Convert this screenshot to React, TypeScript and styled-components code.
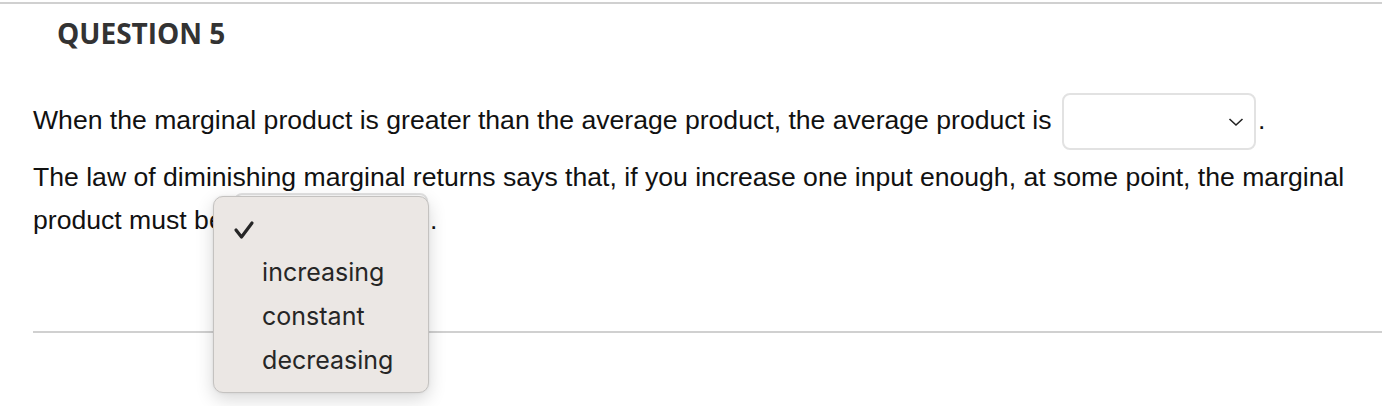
import React from "react";
import styled, {createGlobalStyle} from "styled-components";

const GlobalStyle = createGlobalStyle`
    html, body {
        margin: 0;
        padding: 0;
        background: #ffffff;
    }
    body {
        font-family: "Liberation Sans", Arial, sans-serif;
    }
`;

const Page = styled.div`
    padding-top: 2px;
    width: 1382px;
    min-height: 404px;
`;

const TopRule = styled.div`
    height: 2px;
    background: #d0d0d0;
`;

const Heading = styled.h2`
    margin: 11px 0 0 57px;
    font-family: "Open Sans", sans-serif;
    font-weight: 700;
    font-size: 28px;
    line-height: 36px;
    color: #333333;
`;

const Body = styled.div`
    padding-left: 33px;
`;

const Para = styled.p<{top: number}>`
    margin: ${(p) => p.top}px 0 0;
    font-size: 26.6px;
    line-height: 32px;
    color: #111111;
`;

const SelectWrap = styled.span`
    position: relative;
    display: inline-block;
    vertical-align: middle;
    margin-left: 3px;
    margin-right: 2px;
`;

const SelectBox = styled.span`
    display: flex;
    align-items: center;
    justify-content: flex-end;
    box-sizing: border-box;
    width: 194px;
    height: 57px;
    padding-right: 10px;
    border: 2px solid #e2e2e2;
    border-radius: 8px;
    background: #ffffff;
    color: #222222;
`;

const Menu = styled.div`
    position: absolute;
    z-index: 5;
    top: 3px;
    left: -21px;
    box-sizing: border-box;
    width: 216px;
    height: 197px;
    padding: 13px 0 0;
    background: #ebe7e4;
    border: 1px solid #c4c2c0;
    border-radius: 10px;
    box-shadow: 0 6px 18px rgba(0, 0, 0, 0.16), 0 0 3px rgba(0, 0, 0, 0.08);
    font-family: Inter, "Noto Sans", sans-serif;
    font-size: 25px;
    color: #262626;
`;

const Option = styled.div<{compact?: boolean}>`
    display: flex;
    align-items: center;
    height: ${(p) => (p.compact ? 40 : 44)}px;
    padding-left: 48px;
    position: relative;
`;

const Check = styled.svg`
    position: absolute;
    left: 19px;
    top: 50%;
    margin-top: -10px;
`;

const BottomRule = styled.div`
    margin: 81px 0 0 33px;
    height: 2px;
    background: #d0d0d0;
`;

const Chevron = () => (
    <svg width="16" height="10" viewBox="0 0 16 10">
        <polyline points="1.5,2 8,8 14.5,2" fill="none" stroke="#222" strokeWidth="1.6" />
    </svg>
);

const Dropdown: React.FC<{open?: boolean; options: string[]}> = ({open, options}) => (
    <SelectWrap>
        <SelectBox>
            <Chevron />
        </SelectBox>
        {open && (
            <Menu>
                <Option compact>
                    <Check width="22" height="20" viewBox="0 0 22 20">
                        <polyline
                            points="3,10 8.5,17 19,3"
                            fill="none"
                            stroke="#262626"
                            strokeWidth="3.2"
                            strokeLinecap="round"
                            strokeLinejoin="round"
                        />
                    </Check>
                </Option>
                {options.map((o) => (
                    <Option key={o}>{o}</Option>
                ))}
            </Menu>
        )}
    </SelectWrap>
);

const options = ["increasing", "constant", "decreasing"];

export default function App() {
    return (
        <Page>
            <GlobalStyle />
            <TopRule />
            <Heading>QUESTION 5</Heading>
            <Body>
                <Para top={42}>
                    When the marginal product is greater than the average product, the average product is{" "}
                    <Dropdown options={options} />.
                </Para>
                <Para top={11}>
                    The law of diminishing marginal returns says that, if you increase one input enough, at some
                    point, the marginal product must be <Dropdown open options={options} />.
                </Para>
            </Body>
            <BottomRule />
        </Page>
    );
}
